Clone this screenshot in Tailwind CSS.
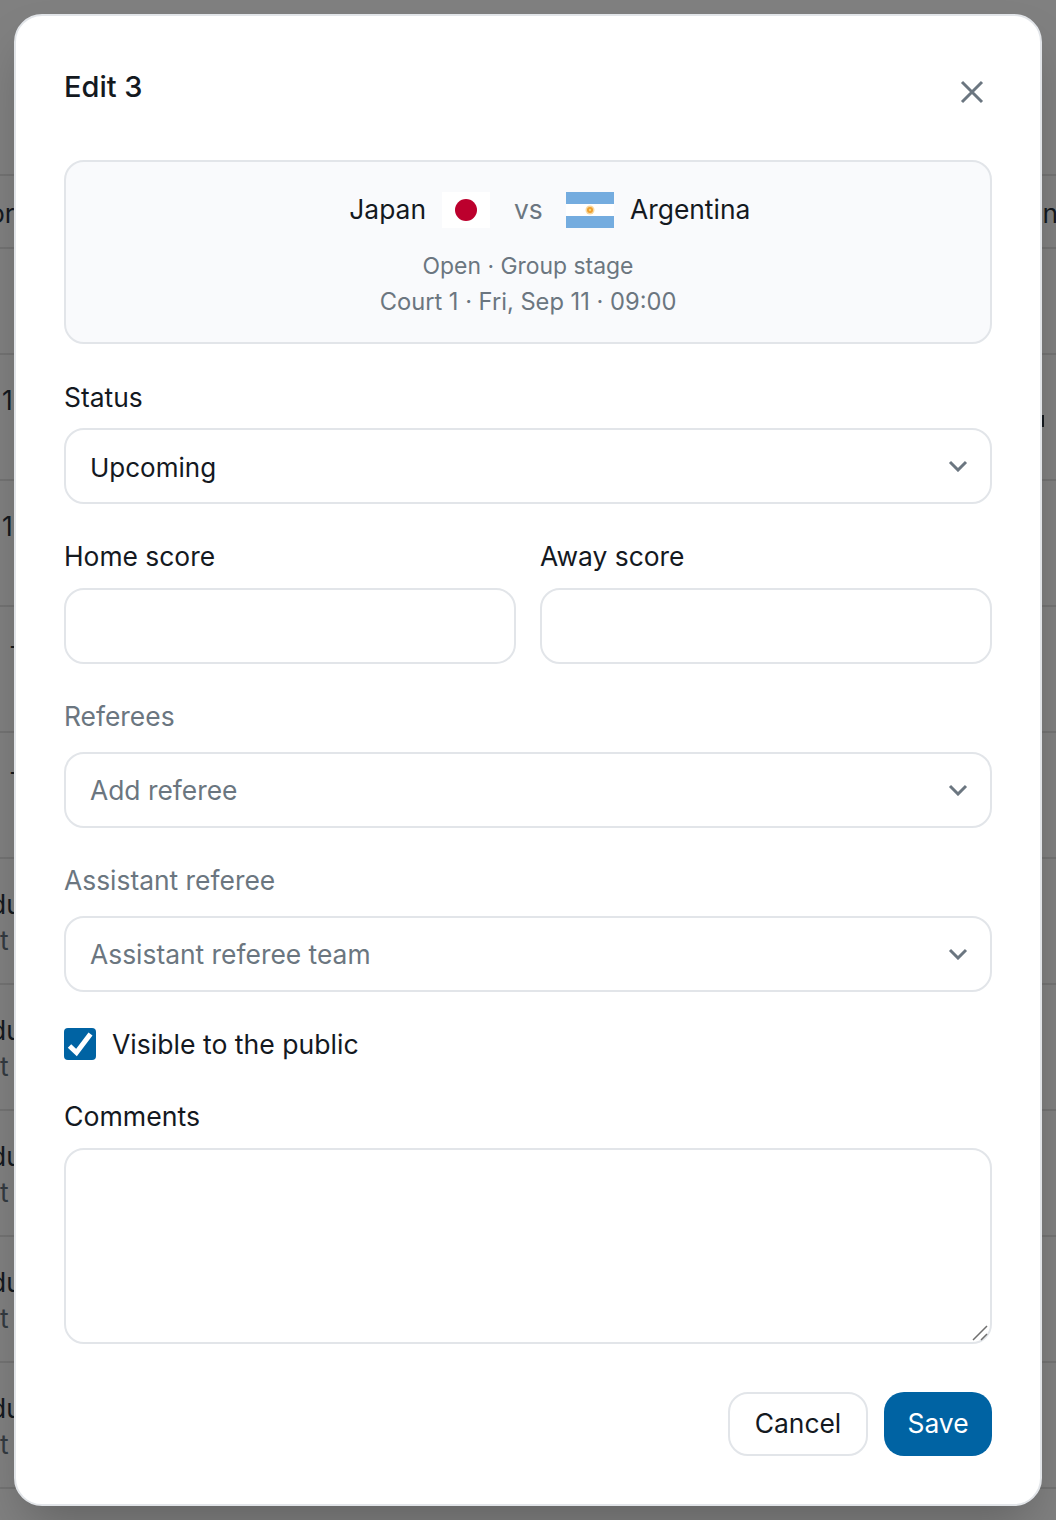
<!DOCTYPE html>
<html>
<head>
    <title>Edit match</title>
    <meta charset="UTF-8" />
    <script src="https://cdn.jsdelivr.net/npm/@tailwindcss/browser@4"></script>
</head>
<body>
    <div class="relative w-[1056px] h-[1520px] overflow-hidden bg-[#808080] font-['Inter',sans-serif] text-[26.4px] text-[#14191f]">
        <!-- table behind the dialog -->
        <div class="pt-[174px] text-[#14191f]">
            <div class="h-[75px] border-y-2 border-[#737373] flex items-center justify-between -ml-[11px] -mr-[2px] pt-[4px]"><span>or</span><span>n</span></div>
            <div class="h-[106px] border-b-2 border-[#737373]"></div>
            <div class="h-[126px] border-b-2 border-[#737373] flex justify-between pl-[2px] pt-[26px]"><span>1</span><span class="mt-[34px] mr-[12px] w-[2px] h-[12px] bg-[#14191f]"></span></div>
            <div class="h-[126px] border-b-2 border-[#737373] pl-[2px] pt-[26px]">1</div>
            <div class="h-[126px] border-b-2 border-[#737373] pl-[9px] pt-[19px]">-</div>
            <div class="h-[126px] border-b-2 border-[#737373] pl-[9px] pt-[19px]">-</div>
            <div class="h-[126px] border-b-2 border-[#737373] -ml-[10px] pt-[27px] leading-[36px]"><div>du</div><div class="pl-[10px] text-[#333a40]">t</div></div>
            <div class="h-[126px] border-b-2 border-[#737373] -ml-[10px] pt-[27px] leading-[36px]"><div>du</div><div class="pl-[10px] text-[#333a40]">t</div></div>
            <div class="h-[126px] border-b-2 border-[#737373] -ml-[10px] pt-[27px] leading-[36px]"><div>du</div><div class="pl-[10px] text-[#333a40]">t</div></div>
            <div class="h-[126px] border-b-2 border-[#737373] -ml-[10px] pt-[27px] leading-[36px]"><div>du</div><div class="pl-[10px] text-[#333a40]">t</div></div>
            <div class="h-[126px] border-b-2 border-[#737373] -ml-[10px] pt-[27px] leading-[36px]"><div>du</div><div class="pl-[10px] text-[#333a40]">t</div></div>
        </div>

        <!-- dialog -->
        <div class="absolute left-[14px] top-[14px] w-[1028px] h-[1492px] rounded-[28px] border-2 border-[#e2e5e9] bg-white p-[48px] shadow-2xl">
            <div class="flex items-start justify-between h-[96px]">
                <h2 class="text-[29px] font-medium leading-[46px]">Edit 3</h2>
                <button class="mt-[16px] mr-[8px] w-[24px] h-[24px] text-[#6b7680]">
                    <svg viewBox="0 0 24 24" class="w-[24px] h-[24px]" fill="none" stroke="currentColor" stroke-width="3"><path d="M2 2 22 22M22 2 2 22"/></svg>
                </button>
            </div>

            <div class="h-[184px] rounded-[20px] border-2 border-[#e2e5e9] bg-[#f9fafc] pt-[28px] text-center">
                <div class="grid grid-cols-[1fr_28px_1fr] gap-6 items-center h-[36px]">
                    <div class="flex items-center justify-end gap-4">
                        <span>Japan</span>
                        <svg viewBox="0 0 48 36" class="w-[48px] h-[36px]"><rect width="48" height="36" fill="#fff"/><circle cx="24" cy="18" r="11" fill="#bc002d"/></svg>
                    </div>
                    <span class="text-[#6b7680]">vs</span>
                    <div class="flex items-center gap-4">
                        <svg viewBox="0 0 48 36" class="w-[48px] h-[36px]"><rect width="48" height="36" fill="#74acdf"/><rect y="12" width="48" height="12" fill="#fff"/><circle cx="24" cy="18" r="4.500" fill="#f8d9a0"/><circle cx="24" cy="18" r="3" fill="#ef9f2e"/><circle cx="24" cy="18" r="1.200" fill="#f8d070"/></svg>
                        <span>Argentina</span>
                    </div>
                </div>
                <div class="mt-[22px] text-[23.7px] leading-[36px] text-[#6b7680]">
                    <div class="text-[22.9px]">Open · Group stage</div>
                    <div>Court 1 · Fri, Sep 11 · 09:00</div>
                </div>
            </div>

            <div class="mt-8">
                <label class="block leading-[40px] pt-[1px] h-[40px] mb-3">Status</label>
                <div class="relative">
                    <select class="w-full h-[76px] appearance-none rounded-[20px] border-2 border-[#e2e5e9] bg-white pl-6 pt-[2px] text-[26px]"><option>Upcoming</option></select>
                    <svg viewBox="0 0 20 12" class="absolute right-[24px] top-[32px] w-[20px] h-[12px]" fill="none" stroke="#6b7680" stroke-width="3"><path d="M2 2 10 10 18 2"/></svg>
                </div>
            </div>

            <div class="mt-8 grid grid-cols-2 gap-6">
                <div>
                    <label class="block leading-[40px] h-[40px] mb-3">Home score</label>
                    <input class="w-full h-[76px] rounded-[20px] border-2 border-[#e2e5e9] px-6" />
                </div>
                <div>
                    <label class="block leading-[40px] h-[40px] mb-3">Away score</label>
                    <input class="w-full h-[76px] rounded-[20px] border-2 border-[#e2e5e9] px-6" />
                </div>
            </div>

            <div class="mt-8">
                <label class="block leading-[40px] h-[40px] mb-4 text-[#6b7680]">Referees</label>
                <div class="relative">
                    <select class="w-full h-[76px] appearance-none rounded-[20px] border-2 border-[#e2e5e9] bg-white pl-6 pt-[2px] text-[#6b7680]"><option>Add referee</option></select>
                    <svg viewBox="0 0 20 12" class="absolute right-[24px] top-[32px] w-[20px] h-[12px]" fill="none" stroke="#6b7680" stroke-width="3"><path d="M2 2 10 10 18 2"/></svg>
                </div>
            </div>

            <div class="mt-8">
                <label class="block leading-[40px] h-[40px] mb-4 text-[#6b7680]">Assistant referee</label>
                <div class="relative">
                    <select class="w-full h-[76px] appearance-none rounded-[20px] border-2 border-[#e2e5e9] bg-white pl-6 pt-[2px] text-[#6b7680]"><option>Assistant referee team</option></select>
                    <svg viewBox="0 0 20 12" class="absolute right-[24px] top-[32px] w-[20px] h-[12px]" fill="none" stroke="#6b7680" stroke-width="3"><path d="M2 2 10 10 18 2"/></svg>
                </div>
            </div>

            <div class="mt-8 flex items-center gap-4 h-[40px]">
                <span class="w-[32px] h-[32px] rounded-[4px] bg-[#0063a3]">
                    <svg viewBox="0 0 32 32" class="w-[32px] h-[32px]" fill="none" stroke="#fff" stroke-width="5"><path d="M5.500 18 12.500 24.500 26.500 6"/></svg>
                </span>
                <span class="pt-[2px] text-[26.6px]">Visible to the public</span>
            </div>

            <div class="mt-8">
                <label class="block leading-[40px] h-[40px] mb-3 text-[26.7px]">Comments</label>
                <div class="relative h-[196px]">
                    <textarea class="block w-full h-[196px] resize-none rounded-[20px] border-2 border-[#e2e5e9] px-6 py-4"></textarea>
                    <svg viewBox="0 0 18 18" class="absolute right-[2px] bottom-[2px] w-[18px] h-[18px]" fill="none" stroke="#6f6f6f" stroke-width="1.500"><path d="M1 16 15 2M9 16 15 10"/></svg>
                </div>
            </div>

            <div class="mt-12 flex justify-end gap-4">
                <button class="w-[140px] h-[64px] rounded-[20px] border-2 border-[#e2e5e9] bg-white">Cancel</button>
                <button class="w-[108px] h-[64px] rounded-[20px] bg-[#0063a3] text-white">Save</button>
            </div>
        </div>
    </div>
</body>
</html>
